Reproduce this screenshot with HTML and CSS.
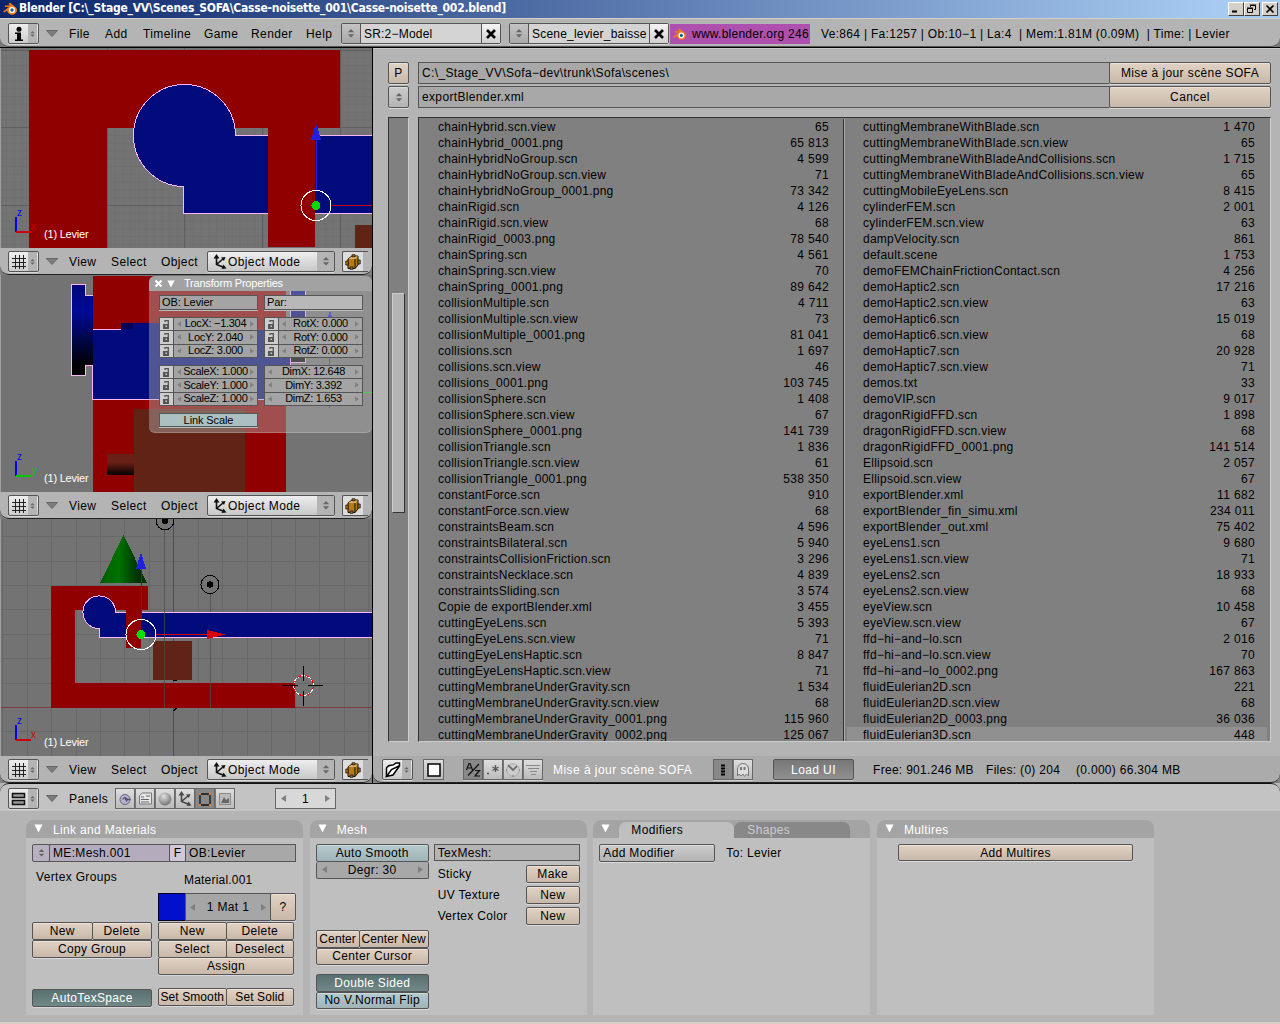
FILE: index.html
```html
<!DOCTYPE html>
<html lang="fr">
<head>
<meta charset="utf-8">
<title>Blender</title>
<link rel="stylesheet" href="styles.css">
</head>
<body>
<svg class="defs" width="0" height="0" aria-hidden="true">
  <defs>
    <linearGradient id="flange" x1="0" y1="0" x2="0" y2="1"><stop offset="0" stop-color="#00087a"/><stop offset=".3" stop-color="#000a98"/><stop offset=".6" stop-color="#00064a"/><stop offset=".9" stop-color="#000"/></linearGradient>
    <linearGradient id="cyl" x1="0" y1="0" x2="0" y2="1"><stop offset="0" stop-color="#6a2016"/><stop offset=".4" stop-color="#6a2016"/><stop offset="1" stop-color="#080000"/></linearGradient>
    <linearGradient id="cone" x1="0" y1="0" x2="1" y2="0"><stop offset="0" stop-color="#005a00"/><stop offset=".4" stop-color="#007200"/><stop offset=".85" stop-color="#002c00"/><stop offset="1" stop-color="#003c00"/></linearGradient>
    <radialGradient id="ball" cx=".4" cy=".3" r=".7"><stop offset="0" stop-color="#ddd"/><stop offset="1" stop-color="#777"/></radialGradient>
    <pattern id="fine" x="-1.6" y="49.4" width="7.78" height="7.78" patternUnits="userSpaceOnUse"><path d="M0 .5H7.78M.5 0V7.78" stroke="#6f6f6f" fill="none"/></pattern>
  </defs>
  <symbol id="i-logo" viewBox="0 0 16 14"><path d="M1 9.5 7 5H3V3.500h5L6.500 2 8 .8l6 4.700a5 4.500 0 1 1-9 3L2.500 10.500z" fill="#f47c14"/><circle cx="10" cy="8" r="3.100" fill="#fff"/><circle cx="10" cy="8" r="1.700" fill="#1c5a9c"/></symbol>
  <symbol id="i-grid" viewBox="0 0 16 16"><path d="M4.500 1v14M8.500 1v14M12.500 1v14M1 4.500h14M1 8.500h14M1 12.500h14" stroke="#222" fill="none"/></symbol>
  <symbol id="i-info" viewBox="0 0 16 16"><circle cx="8" cy="3.200" r="2.500"/><path d="M4 6.500h6v7h2V15H4v-1.500h2V8H4z"/></symbol>
  <symbol id="i-axes" viewBox="0 0 16 16"><path d="M4.500 3v7.500L11 13M5 10l6-5" stroke="#111" stroke-width="1.600" fill="none"/><path d="M4.500 0 7.500 4.500h-6zM14.500 14.500l-5 .5 2-4.500zM13.500 3l-1.500 4-3-3.500z" fill="#111"/></symbol>
  <symbol id="i-cube" viewBox="0 0 16 16"><path d="M3 5 7 2h6v9l-3 3.500H3z" fill="#b87a12" stroke="#111"/><path d="M3.500 5 7 2.500h6L10 5z" fill="#e8b860"/><path d="M10 5v9.500" stroke="#111"/><path d="M.8 7h2.400v4H.8zM13 6h2.200v4H13zM7 .8h3v2H7zM5 13h3v2.300H5z" stroke="#111" stroke-width=".8" fill="#b87a12"/></symbol>
  <symbol id="i-lock" viewBox="0 0 10 11"><path d="M4 3V1.700h3.300V5" fill="none" stroke="#555" stroke-width="1.300"/><path d="M2 5h6v5H2z" fill="#555"/><path d="M4.500 6.500h1.500v1.500H4.500z" fill="#ccc"/></symbol>
  <symbol id="i-ud" viewBox="0 0 8 10"><path d="M4 0 7.500 3.700h-7zM4 9.500 7.500 5.800h-7z" fill="#666"/></symbol>
  <symbol id="i-down" viewBox="0 0 12 8"><path d="M.5.5h11L6 6.500z" fill="#7c7c7c" stroke="#666"/></symbol>
  <symbol id="i-tri" viewBox="0 0 10 10"><path d="M.5.5h9L5 9.500z" fill="#fff"/></symbol>
  <symbol id="i-l" viewBox="0 0 5 7"><path d="M5 0v7L0 3.500z" fill="#808080"/></symbol>
  <symbol id="i-r" viewBox="0 0 5 7"><path d="M0 0v7l5-3.500z" fill="#808080"/></symbol>
  <symbol id="i-x" viewBox="0 0 12 12"><path d="M2 2l8 8M10 2l-8 8" stroke="#000" stroke-width="2.600"/></symbol>
</svg>

<div class="titlebar">
  <svg class="logo" width="16" height="14"><use href="#i-logo"/></svg>
  <h1 class="title">Blender [C:\_Stage_VV\Scenes_SOFA\Casse-noisette_001\Casse-noisette_002.blend]</h1>
  <div class="winbtns">
    <b class="wb"><svg width="12" height="10"><path d="M2 7.500h5" stroke="#000" stroke-width="2"/></svg></b>
    <b class="wb"><svg width="12" height="10"><path d="M4.500 3V1.500h5v4H8M4 1h6M1.500 4.500h5v4h-5zM1 4h6" stroke="#000" fill="none"/></svg></b>
    <b class="wb wbx"><svg width="12" height="10"><path d="M2.500 1.500l7 7M9.500 1.500l-7 7" stroke="#000" stroke-width="1.700"/></svg></b>
  </div>
</div>

<div class="top">
  <div class="bar topbar">
    <span class="ed"><svg width="16" height="16"><use href="#i-info"/></svg><i><svg width="5" height="8"><use href="#i-ud"/></svg></i></span>
    <svg class="fold" width="12" height="8"><use href="#i-down"/></svg>
    <nav class="menus"><a class="m-file">File</a><a class="m-add">Add</a><a class="m-time">Timeline</a><a class="m-game">Game</a><a class="m-rend">Render</a><a class="m-help">Help</a></nav>
    <div class="picker"><i><svg width="8" height="9"><use href="#i-ud"/></svg></i><span>SR:2−Model</span><b><svg width="12" height="12"><use href="#i-x"/></svg></b></div>
    <div class="picker"><i><svg width="8" height="9"><use href="#i-ud"/></svg></i><span>Scene_levier_baisse</span><b><svg width="12" height="12"><use href="#i-x"/></svg></b></div>
    <div class="promo"><svg width="15" height="13"><use href="#i-logo"/></svg><span>www.blender.org 246</span></div>
    <p class="stats">Ve:864 | Fa:1257 | Ob:10−1 | La:4&nbsp; | Mem:1.81M (0.09M)&nbsp; | Time: | Levier</p>
  </div>
</div>

<main class="work">
  <div class="views">
    <section class="view v1">
      <svg width="372" height="200" viewBox="0 48 372 200">
        <rect y="48" width="372" height="200" fill="#737373"/><rect y="48" width="372" height="200" fill="url(#fine)"/>
        <path d="M107.500 48v200M184.500 48v200M262.500 48v200M340.500 48v200M0 50.500h372M0 127.500h372M0 205.500h372" stroke="#606060"/>
        <path d="M29 50H340V128H315V247H268V128H107V248H29z" fill="#910000"/>
        <path d="M268 135.500H235.500A51 51 0 1 0 183.500 186.500V213.500H268" fill="#020b7c" stroke="#f8b8f8"/>
        <path d="M268 50h47v197h-47z" fill="#910000"/>
        <path d="M315 135h57v79h-57z" fill="#020b7c"/><path d="M315 135.500h57M315 213.500h57" stroke="#f8b8f8"/>
        <path d="M355 225h17v23h-17z" fill="#612315"/>
        <path d="M331 205h41v1h-41z" fill="#c00010"/><path d="M316 139h1v51h-1z" fill="#2020e0"/><path d="M316 123l5 16.500h-10z" fill="#2020e0"/>
        <circle cx="316" cy="205.500" r="15" fill="none" stroke="#fff"/><circle cx="316" cy="205.500" r="4.500" fill="#00d800"/>
        <path d="M15 217h2v15h-2z" fill="#00f"/><path d="M16 231h15v2h-15z" fill="#d00000"/>
        <text class="ax" x="17" y="216" fill="#00f">z</text><text class="ax" x="31" y="230" fill="#d00000">x</text>
        <text class="obj" x="44" y="238">(1) Levier</text>
      </svg>
    </section>
    <div class="bar vbar">
      <span class="ed"><svg width="16" height="16"><use href="#i-grid"/></svg><i><svg width="5" height="8"><use href="#i-ud"/></svg></i></span>
      <svg class="fold" width="12" height="8"><use href="#i-down"/></svg>
      <nav class="menus"><a class="m-view">View</a><a class="m-sel">Select</a><a class="m-obj">Object</a></nav>
      <div class="mode"><svg width="16" height="16"><use href="#i-axes"/></svg><span>Object Mode</span><i><svg width="8" height="9"><use href="#i-ud"/></svg></i></div>
      <div class="shade"><svg width="16" height="16"><use href="#i-cube"/></svg><i></i></div>
    </div>

    <section class="view v2">
      <svg width="372" height="217" viewBox="0 275 372 217">
        <rect y="275" width="372" height="217" fill="#737373"/>
        <path d="M93 276h193v216H93z" fill="#910000"/>
        <path d="M134 409h111v83H134z" fill="#612315"/><path d="M107 454h27v21h-27z" fill="url(#cyl)"/>
        <path d="M290.500 276h15v86h-15z" fill="url(#flange)" stroke="#f8b8f8"/>
        <path d="M92 330h198v69H92z" fill="#020b7c"/><path d="M121 323h75v8h-75z" fill="#020b7c"/><path d="M121 323h12v6h-12z" fill="#040455"/>
        <path d="M85 295h8v70h-8zM71.500 284.500h14v91h-14z" fill="url(#flange)"/>
        <path d="M92.500 295.500H85.500V284.500H71.500V375.500H85.500V365.500H92.500V399.500H290V362M92.500 329.500H121" fill="none" stroke="#f8b8f8"/>
        <path d="M329 318h1v90h-1z" fill="#2020e0"/><path d="M330 310l2 7h-4z" fill="#2020e0"/><path d="M330 392h42v1h-42z" fill="#00d800"/>
        <path d="M15 461h2v15h-2z" fill="#00f"/><path d="M16 475h15v2h-15z" fill="#00c800"/>
        <text class="ax" x="17" y="460" fill="#00f">z</text><text class="ax" x="32" y="474" fill="#00c800">y</text>
        <text class="obj" x="44" y="482">(1) Levier</text>
      </svg>
      <div class="float">
        <h2><svg width="9" height="9"><path d="M1.500 1.500l6 6M7.500 1.500l-6 6" stroke="#fff" stroke-width="2"/></svg><svg width="8" height="8"><use href="#i-tri"/></svg><span>Transform Properties</span></h2>
        <div class="fgrid">
          <div class="tf">OB: Levier</div><div class="tf light">Par:</div>
          <div class="stack">
            <div class="lk"><b><svg width="10" height="11"><use href="#i-lock"/></svg></b><div class="num"><svg width="4" height="6"><use href="#i-l"/></svg><span>LocX: −1.304</span><svg width="4" height="6"><use href="#i-r"/></svg></div></div>
            <div class="lk"><b><svg width="10" height="11"><use href="#i-lock"/></svg></b><div class="num"><svg width="4" height="6"><use href="#i-l"/></svg><span>LocY: 2.040</span><svg width="4" height="6"><use href="#i-r"/></svg></div></div>
            <div class="lk"><b><svg width="10" height="11"><use href="#i-lock"/></svg></b><div class="num"><svg width="4" height="6"><use href="#i-l"/></svg><span>LocZ: 3.000</span><svg width="4" height="6"><use href="#i-r"/></svg></div></div>
          </div>
          <div class="stack">
            <div class="lk"><b><svg width="10" height="11"><use href="#i-lock"/></svg></b><div class="num"><svg width="4" height="6"><use href="#i-l"/></svg><span>RotX: 0.000</span><svg width="4" height="6"><use href="#i-r"/></svg></div></div>
            <div class="lk"><b><svg width="10" height="11"><use href="#i-lock"/></svg></b><div class="num"><svg width="4" height="6"><use href="#i-l"/></svg><span>RotY: 0.000</span><svg width="4" height="6"><use href="#i-r"/></svg></div></div>
            <div class="lk"><b><svg width="10" height="11"><use href="#i-lock"/></svg></b><div class="num"><svg width="4" height="6"><use href="#i-l"/></svg><span>RotZ: 0.000</span><svg width="4" height="6"><use href="#i-r"/></svg></div></div>
          </div>
          <div class="stack">
            <div class="lk"><b><svg width="10" height="11"><use href="#i-lock"/></svg></b><div class="num"><svg width="4" height="6"><use href="#i-l"/></svg><span>ScaleX: 1.000</span><svg width="4" height="6"><use href="#i-r"/></svg></div></div>
            <div class="lk"><b><svg width="10" height="11"><use href="#i-lock"/></svg></b><div class="num"><svg width="4" height="6"><use href="#i-l"/></svg><span>ScaleY: 1.000</span><svg width="4" height="6"><use href="#i-r"/></svg></div></div>
            <div class="lk"><b><svg width="10" height="11"><use href="#i-lock"/></svg></b><div class="num"><svg width="4" height="6"><use href="#i-l"/></svg><span>ScaleZ: 1.000</span><svg width="4" height="6"><use href="#i-r"/></svg></div></div>
          </div>
          <div class="stack">
            <div class="lk"><div class="num"><svg width="4" height="6"><use href="#i-l"/></svg><span>DimX: 12.648</span><svg width="4" height="6"><use href="#i-r"/></svg></div></div>
            <div class="lk"><div class="num"><svg width="4" height="6"><use href="#i-l"/></svg><span>DimY: 3.392</span><svg width="4" height="6"><use href="#i-r"/></svg></div></div>
            <div class="lk"><div class="num"><svg width="4" height="6"><use href="#i-l"/></svg><span>DimZ: 1.653</span><svg width="4" height="6"><use href="#i-r"/></svg></div></div>
          </div>
          <div class="link">Link Scale</div>
        </div>
      </div>
    </section>
    <div class="bar vbar">
      <span class="ed"><svg width="16" height="16"><use href="#i-grid"/></svg><i><svg width="5" height="8"><use href="#i-ud"/></svg></i></span>
      <svg class="fold" width="12" height="8"><use href="#i-down"/></svg>
      <nav class="menus"><a class="m-view">View</a><a class="m-sel">Select</a><a class="m-obj">Object</a></nav>
      <div class="mode"><svg width="16" height="16"><use href="#i-axes"/></svg><span>Object Mode</span><i><svg width="8" height="9"><use href="#i-ud"/></svg></i></div>
      <div class="shade"><svg width="16" height="16"><use href="#i-cube"/></svg><i></i></div>
    </div>

    <section class="view v3">
      <svg width="372" height="237" viewBox="0 519 372 237">
        <rect y="519" width="372" height="237" fill="#737373"/>
        <path d="M2.500 519v237M27.500 519v237M51.500 519v237M76.500 519v237M100.500 519v237M124.500 519v237M149.500 519v237M198.500 519v237M222.500 519v237M247.500 519v237M271.500 519v237M295.500 519v237M319.500 519v237M344.500 519v237M368.500 519v237M0 536.500h372M0 561.500h372M0 585.500h372M0 609.500h372M0 634.500h372M0 658.500h372M0 683.500h372M0 731.500h372" stroke="#686868"/>
        <path d="M173 519h1v237h-1z" fill="#484880"/><path d="M0 707h372v1H0z" fill="#803c3c"/>
        <path d="M51 586H148V610H141V648H126V610H75V683H295V708H51z" fill="#910000"/>
        <path d="M123.500 535 147 583H100z" fill="url(#cone)"/>
        <path d="M372 612.500H115.500A16.300 16.300 0 1 0 99.500 628.500V637.500H372" fill="#020b7c" stroke="#f8b8f8"/>
        <path d="M126 605h15v43h-15z" fill="#910000"/>
        <path d="M153 641h39v39h-39z" fill="#612315"/>
        <path d="M164 530h1v178h-1zM210 594h1v18h-1zM210 638h1v70h-1z" fill="#4c4c4c" fill-opacity=".7"/><path d="M173 680.500h4M173.500 711l3-3" stroke="#000"/>
        <circle cx="165" cy="521" r="8.700" fill="none" stroke="#000"/><circle cx="165" cy="521" r="3"/>
        <circle cx="210" cy="584.500" r="9" fill="none" stroke="#000"/><circle cx="210" cy="584.500" r="3.200"/>
        <path d="M141 568h1v52h-1z" fill="#2020e0"/><path d="M141 552l5 17h-10z" fill="#2020e0"/>
        <path d="M156 634h52v1h-52z" fill="#d80000"/><path d="M225.500 634.500l-18.500 4.500v-9z" fill="#d80000"/>
        <circle cx="141" cy="634.500" r="15" fill="none" stroke="#fff"/><circle cx="141" cy="634.500" r="4.500" fill="#00e000"/>
        <circle cx="303.500" cy="685.500" r="10" fill="none" stroke="#fff"/><circle cx="303.500" cy="685.500" r="10" fill="none" stroke="#f00000" stroke-dasharray="4 4"/>
        <path d="M283 685h15v1h-15zM308 685h15v1h-15zM303 666h1v15h-1zM303 691h1v15h-1z"/>
        <path d="M15 725h2v15h-2z" fill="#00f"/><path d="M16 739h15v2h-15z" fill="#d00000"/>
        <text class="ax" x="17" y="724" fill="#00f">z</text><text class="ax" x="31" y="738" fill="#d00000">x</text>
        <text class="obj" x="44" y="746">(1) Levier</text>
      </svg>
    </section>
    <div class="bar vbar">
      <span class="ed"><svg width="16" height="16"><use href="#i-grid"/></svg><i><svg width="5" height="8"><use href="#i-ud"/></svg></i></span>
      <svg class="fold" width="12" height="8"><use href="#i-down"/></svg>
      <nav class="menus"><a class="m-view">View</a><a class="m-sel">Select</a><a class="m-obj">Object</a></nav>
      <div class="mode"><svg width="16" height="16"><use href="#i-axes"/></svg><span>Object Mode</span><i><svg width="8" height="9"><use href="#i-ud"/></svg></i></div>
      <div class="shade"><svg width="16" height="16"><use href="#i-cube"/></svg><i></i></div>
    </div>
  </div>

  <section class="files">
    <div class="browser">
      <div class="frow"><b class="btn pbtn">P</b><div class="path">C:\_Stage_VV\Sofa−dev\trunk\Sofa\scenes\</div><b class="btn act">Mise à jour scène SOFA</b></div>
      <div class="frow"><b class="btn grey pbtn"><svg width="8" height="9"><use href="#i-ud"/></svg></b><div class="path">exportBlender.xml</div><b class="btn act">Cancel</b></div>
      <div class="lists">
        <div class="track"><div class="thumb"></div></div>
        <div class="panes">
          <ul class="pane">
            <li>chainHybrid.scn.view<b>65</b></li><li>chainHybrid_0001.png<b>65 813</b></li><li>chainHybridNoGroup.scn<b>4 599</b></li><li>chainHybridNoGroup.scn.view<b>71</b></li><li>chainHybridNoGroup_0001.png<b>73 342</b></li><li>chainRigid.scn<b>4 126</b></li><li>chainRigid.scn.view<b>68</b></li><li>chainRigid_0003.png<b>78 540</b></li><li>chainSpring.scn<b>4 561</b></li><li>chainSpring.scn.view<b>70</b></li><li>chainSpring_0001.png<b>89 642</b></li><li>collisionMultiple.scn<b>4 711</b></li><li>collisionMultiple.scn.view<b>73</b></li><li>collisionMultiple_0001.png<b>81 041</b></li><li>collisions.scn<b>1 697</b></li><li>collisions.scn.view<b>46</b></li><li>collisions_0001.png<b>103 745</b></li><li>collisionSphere.scn<b>1 408</b></li><li>collisionSphere.scn.view<b>67</b></li><li>collisionSphere_0001.png<b>141 739</b></li><li>collisionTriangle.scn<b>1 836</b></li><li>collisionTriangle.scn.view<b>61</b></li><li>collisionTriangle_0001.png<b>538 350</b></li><li>constantForce.scn<b>910</b></li><li>constantForce.scn.view<b>68</b></li><li>constraintsBeam.scn<b>4 596</b></li><li>constraintsBilateral.scn<b>5 940</b></li><li>constraintsCollisionFriction.scn<b>3 296</b></li><li>constraintsNecklace.scn<b>4 839</b></li><li>constraintsSliding.scn<b>3 574</b></li><li>Copie de exportBlender.xml<b>3 455</b></li><li>cuttingEyeLens.scn<b>5 393</b></li><li>cuttingEyeLens.scn.view<b>71</b></li><li>cuttingEyeLensHaptic.scn<b>8 847</b></li><li>cuttingEyeLensHaptic.scn.view<b>71</b></li><li>cuttingMembraneUnderGravity.scn<b>1 534</b></li><li>cuttingMembraneUnderGravity.scn.view<b>68</b></li><li>cuttingMembraneUnderGravity_0001.png<b>115 960</b></li><li>cuttingMembraneUnderGravity_0002.png<b>125 067</b></li>
          </ul>
          <ul class="pane second">
            <li>cuttingMembraneWithBlade.scn<b>1 470</b></li><li>cuttingMembraneWithBlade.scn.view<b>65</b></li><li>cuttingMembraneWithBladeAndCollisions.scn<b>1 715</b></li><li>cuttingMembraneWithBladeAndCollisions.scn.view<b>65</b></li><li>cuttingMobileEyeLens.scn<b>8 415</b></li><li>cylinderFEM.scn<b>2 001</b></li><li>cylinderFEM.scn.view<b>63</b></li><li>dampVelocity.scn<b>861</b></li><li>default.scene<b>1 753</b></li><li>demoFEMChainFrictionContact.scn<b>4 256</b></li><li>demoHaptic2.scn<b>17 216</b></li><li>demoHaptic2.scn.view<b>63</b></li><li>demoHaptic6.scn<b>15 019</b></li><li>demoHaptic6.scn.view<b>68</b></li><li>demoHaptic7.scn<b>20 928</b></li><li>demoHaptic7.scn.view<b>71</b></li><li>demos.txt<b>33</b></li><li>demoVIP.scn<b>9 017</b></li><li>dragonRigidFFD.scn<b>1 898</b></li><li>dragonRigidFFD.scn.view<b>68</b></li><li>dragonRigidFFD_0001.png<b>141 514</b></li><li>Ellipsoid.scn<b>2 057</b></li><li>Ellipsoid.scn.view<b>67</b></li><li>exportBlender.xml<b>11 682</b></li><li>exportBlender_fin_simu.xml<b>234 011</b></li><li>exportBlender_out.xml<b>75 402</b></li><li>eyeLens1.scn<b>9 680</b></li><li>eyeLens1.scn.view<b>71</b></li><li>eyeLens2.scn<b>18 933</b></li><li>eyeLens2.scn.view<b>68</b></li><li>eyeView.scn<b>10 458</b></li><li>eyeView.scn.view<b>67</b></li><li>ffd−hi−and−lo.scn<b>2 016</b></li><li>ffd−hi−and−lo.scn.view<b>70</b></li><li>ffd−hi−and−lo_0002.png<b>167 863</b></li><li>fluidEulerian2D.scn<b>221</b></li><li>fluidEulerian2D.scn.view<b>68</b></li><li>fluidEulerian2D_0003.png<b>36 036</b></li><li class="hot">fluidEulerian3D.scn<b>448</b></li>
          </ul>
        </div>
      </div>
    </div>
    <div class="bar fbar">
      <span class="ed"><svg width="16" height="16"><path d="M1.500 14.500V6Q3 3 8 3l3-2h3.500v3L8 13l-6.500 1.500 5-7L14 4" fill="#fff" stroke="#000" stroke-width="1.500"/></svg><i><svg width="5" height="8"><use href="#i-ud"/></svg></i></span>
      <span class="tool full"><svg width="14" height="14"><path d="M1 1h12v12H1z" fill="#fff" stroke="#000" stroke-width="1.500"/></svg></span>
      <div class="group sort">
        <span class="tool on"><svg width="17" height="17"><path d="M1.500 9 4 2.500h1L7.500 9M3 7h3.500M3 14.500 14 3M10 9.500h4.500l-4.500 5.500h5" stroke="#111" fill="none" stroke-width="1.200"/></svg></span>
        <span class="tool"><svg width="16" height="16"><path d="M2 11.500h2M10.500 3v7M7.500 5l6 3.500M13.500 5l-6 3.500" stroke="#555" stroke-width="1.300"/></svg></span>
        <span class="tool"><svg width="16" height="16"><circle cx="8" cy="8" r="6.300" fill="#ccc" stroke="#aaa"/><path d="M3 3l5 5 4-4" stroke="#666" stroke-width="1.700" fill="none"/><path d="M8 13v2M14 8h1M1 8h1" stroke="#777"/></svg></span>
        <span class="tool"><svg width="16" height="16"><path d="M1 3.500h14M3 6.500h11M5 9.500h7M6 12.500h5" stroke="#888"/></svg></span>
      </div>
      <span class="msg">Mise à jour scène SOFA</span>
      <div class="group ghost">
        <span class="tool on"><svg width="16" height="16"><path d="M6 3.500h4M6 6.500h4M6 9.500h4M6 12.500h4" stroke="#000" stroke-width="1.800"/></svg></span>
        <span class="tool"><svg width="16" height="16"><path d="M2.500 14V7a5.500 5.500 0 0 1 11 0v7l-2-2-2 2.500L8 12l-2 2-2-2z" fill="#ddd" stroke="#777"/><path d="M6 5v3M9.500 5v3" stroke="#777" stroke-width="2"/></svg></span>
      </div>
      <span class="load">Load UI</span>
      <span class="f-free">Free: 901.246 MB</span><span class="f-num">Files: (0) 204</span><span>(0.000) 66.304 MB</span>
    </div>
  </section>
</main>

<section class="buttons">
  <div class="bar bbar">
    <span class="ed"><svg width="16" height="16"><path d="M1.500 2.500h12v4h-12zM1.500 9.500h12v4h-12z" fill="#999" stroke="#111" stroke-width="1.500"/></svg><i><svg width="5" height="8"><use href="#i-ud"/></svg></i></span>
    <svg class="fold" width="12" height="8"><use href="#i-down"/></svg>
    <span class="m-panels">Panels</span>
    <div class="group ctx">
      <span class="tool"><svg width="16" height="16"><circle cx="8" cy="8.500" r="5" fill="#b8b0d0" stroke="#66627c"/><path d="M8 8.500h5.500M6 8.500a2 2 0 1 1 3 2" stroke="#55506c" stroke-width="1.300" fill="none"/></svg></span>
      <span class="tool"><svg width="16" height="16"><path d="M2.500 4.500l3-2.500h9v11h-12z" fill="#e6e6e6" stroke="#777"/><path d="M4 6h3M9 5h4M4 8.500h8M4 11h8" stroke="#666" stroke-width="1.200"/></svg></span>
      <span class="tool"><svg width="16" height="16"><circle cx="8" cy="8" r="6.500" fill="url(#ball)"/></svg></span>
      <span class="tool"><svg class="dim" width="16" height="16"><use href="#i-axes"/></svg></span>
      <span class="tool on"><svg width="16" height="16"><path d="M3 3h10v11H3z" fill="none" stroke="#111" stroke-width="1.300"/><path d="M2 2h2v2H2zM12 2h2v2h-2zM2 13h2v2H2zM12 13h2v2h-2z" fill="#e88030"/></svg></span>
      <span class="tool"><svg width="16" height="16"><path d="M2.500 2.500h11v11h-11z" fill="#bbb" stroke="#888"/><path d="M4 12l3-6 2 3 3-2v5z" fill="#666"/></svg></span>
    </div>
    <div class="frame"><svg width="5" height="7"><use href="#i-l"/></svg><span>1</span><svg width="5" height="7"><use href="#i-r"/></svg></div>
  </div>

  <div class="panels">
    <article class="panel">
      <h3><svg width="9" height="9"><use href="#i-tri"/></svg>Link and Materials</h3>
      <div class="pbody">
        <div class="row mesh"><b class="btn lav sel"><svg width="7" height="8"><use href="#i-ud"/></svg></b><b class="lavf">ME:Mesh.001</b><b class="btn lav f">F</b><b class="path grow">OB:Levier</b></div>
        <div class="cols">
          <div class="c-left">
            <p class="vg">Vertex Groups</p>
            <div class="row"><b class="btn grow">New</b><b class="btn grow">Delete</b></div>
            <div class="row"><b class="btn grow">Copy Group</b></div>
            <div class="row auto"><b class="btn dark grow">AutoTexSpace</b></div>
          </div>
          <div class="c-mat">
            <p class="mt">Material.001</p>
            <div class="row mat"><b class="swatch"></b><b class="num matn"><svg width="5" height="7"><use href="#i-l"/></svg><span>1 Mat 1</span><svg width="5" height="7"><use href="#i-r"/></svg></b><b class="btn q">?</b></div>
            <div class="row r2"><b class="btn grow">New</b><b class="btn grow">Delete</b></div>
            <div class="row r2"><b class="btn grow">Select</b><b class="btn grow">Deselect</b></div>
            <div class="row r2"><b class="btn grow">Assign</b></div>
            <div class="row r2 smooth"><b class="btn grow">Set Smooth</b><b class="btn grow">Set Solid</b></div>
          </div>
        </div>
      </div>
    </article>
    <article class="panel">
      <h3><svg width="9" height="9"><use href="#i-tri"/></svg>Mesh</h3>
      <div class="pbody cols2">
        <div class="c-auto">
          <div class="row"><b class="btn teal grow">Auto Smooth</b></div>
          <div class="row"><b class="num grow"><svg width="5" height="7"><use href="#i-l"/></svg><span>Degr: 30</span><svg width="5" height="7"><use href="#i-r"/></svg></b></div>
          <div class="row center"><b class="btn cen">Center</b><b class="btn grow">Center New</b></div>
          <div class="row"><b class="btn grow">Center Cursor</b></div>
          <div class="row dbl"><b class="btn dark grow">Double Sided</b></div>
          <div class="row"><b class="btn teal grow">No V.Normal Flip</b></div>
        </div>
        <div class="c-tex">
          <div class="path tex">TexMesh:</div>
          <div class="kv">Sticky<b class="btn">Make</b></div>
          <div class="kv">UV Texture<b class="btn">New</b></div>
          <div class="kv">Vertex Color<b class="btn">New</b></div>
        </div>
      </div>
    </article>
    <article class="panel">
      <h3 class="tabs"><svg width="9" height="9"><use href="#i-tri"/></svg><span class="tab act-tab">Modifiers</span><span class="tab">Shapes</span></h3>
      <div class="pbody mods"><b class="btn grey addm">Add Modifier</b><span>To: Levier</span></div>
    </article>
    <article class="panel">
      <h3><svg width="9" height="9"><use href="#i-tri"/></svg>Multires</h3>
      <div class="pbody multi"><b class="btn">Add Multires</b></div>
    </article>
  </div>
</section>
</body>
</html>
```
FILE: styles.css
```css
* { box-sizing: border-box; margin: 0; padding: 0; }
body { width: 1280px; height: 1024px; overflow: hidden; background: #d4d0c8; color: #000; font: 12px/14px "Liberation Sans", Arial, sans-serif; letter-spacing: .4px; display: flex; flex-direction: column; white-space: nowrap; }
b, i { font-weight: normal; font-style: normal; }
svg { display: block; flex: none; }
.defs { position: absolute; }

.titlebar { height: 19px; flex: none; display: flex; align-items: center; padding: 0 2px 1px; background: linear-gradient(90deg, #0a246a, #a6caf0 95%); border-bottom: 1px solid #d4d0c8; }
.title { margin-left: 1px; font: bold 12px/17px "DejaVu Sans Condensed", "DejaVu Sans", sans-serif; letter-spacing: -.24px; color: #fff; }
.winbtns { margin-left: auto; display: flex; }
.wb { width: 16px; height: 14px; padding: 1px; background: #d4d0c8; border: 1px solid; border-color: #fff #404040 #404040 #fff; }
.wbx { margin-left: 2px; }

.top { height: 29px; flex: none; background: #777; border-bottom: 1px solid #000; }
.bar { height: 27px; flex: none; display: flex; align-items: flex-start; padding: 3px 0 0 8px; line-height: 22px; border: solid #222; border-width: 0 0 1px; border-radius: 0 0 9px 9px; background: #b4b4b4; }
.topbar { height: 28px; padding-top: 4px; border-color: #555; }
.ed { width: 31px; height: 21px; display: flex; align-items: center; padding-left: 2px; border: 1px solid #555; border-radius: 2px; background: linear-gradient(#eee, #ccc); box-shadow: 0 1px #d8d8d8; }
.ed i { margin-left: 1px; width: 9px; height: 19px; display: flex; align-items: center; justify-content: center; background: #b4b4b4; }
.fold { margin: 7px 11px 0 7px; }
.menus { display: flex; }
.m-file { width: 36px; } .m-add { width: 38px; } .m-time { width: 61px; } .m-game { width: 47px; } .m-rend { width: 55px; } .m-help { width: 35px; }
.m-view { width: 42px; } .m-sel { width: 50px; } .m-obj { width: 46px; }
.picker { width: 160px; height: 21px; margin-right: 8px; display: flex; border: 1px solid #555; border-radius: 2px; background: #d4d4d4; box-shadow: 0 1px #d8d8d8; }
.picker i { width: 19px; display: flex; align-items: center; justify-content: center; background: linear-gradient(#c4c4c4, #a8a8a8); border-right: 1px solid #555; }
.picker span { flex: 1; padding-left: 3px; line-height: 21px; letter-spacing: .2px; }
.picker b { width: 19px; display: flex; align-items: center; justify-content: center; background: linear-gradient(#f4f4f4, #d0d0d0); border-left: 1px solid #555; }
.picker + .promo { margin-left: -7px; }
.promo { width: 140px; height: 20px; margin-top: 1px; display: flex; align-items: center; padding-left: 2px; background: #ae50ae; line-height: 20px; }
.promo span { margin-left: 5px; letter-spacing: .25px; }
.stats { margin-left: 11px; letter-spacing: .31px; }

.work { height: 735px; flex: none; display: flex; background: #808080; }
.views { width: 373px; flex: none; border-right: 1px solid #000; }
.view { position: relative; overflow: hidden; border-left: 1px solid #a0a0a0; }
.view > svg { margin-left: -1px; shape-rendering: crispEdges; }
.v1 { height: 200px; } .v2 { height: 217px; } .v3 { height: 237px; }
.ax { font: 10px "Liberation Sans", sans-serif; }
.obj { font: 11px "Liberation Sans", sans-serif; letter-spacing: -.2px; fill: #fff; }
.mode { width: 128px; height: 21px; display: flex; align-items: center; padding-left: 4px; border: 1px solid #555; border-radius: 2px; background: linear-gradient(#eee, #c8c8c8); box-shadow: 0 1px #d8d8d8; }
.mode i { margin-left: auto; width: 17px; height: 19px; display: flex; align-items: center; justify-content: center; background: #b4b4b4; }
.shade { width: 26px; height: 21px; margin-left: 7px; padding: 2px 0 0 2px; border: 1px solid #555; border-right: 0; border-radius: 2px 0 0 2px; background: linear-gradient(90deg, #ddd 20px, #b4b4b4 20px); }

.float { position: absolute; left: 148px; top: 1px; width: 223px; height: 157px; background: rgba(180,180,180,.43); border-radius: 6px; box-shadow: inset 0 -1px rgba(255,255,255,.2); font-size: 11px; line-height: 13px; letter-spacing: -.3px; overflow: hidden; }
.float h2 { height: 15px; display: flex; align-items: center; padding-left: 5px; font: inherit; letter-spacing: -.2px; color: #fff; background: #a2a2a2; }
.float h2 svg + svg { margin-left: 4px; }
.float h2 span { margin-left: 9px; }
.fgrid { display: grid; grid-template-columns: 99px 99px; column-gap: 6px; padding: 4px 0 0 10px; }
.tf { height: 15px; padding-left: 2px; background: #a4a4a4; border: 1px solid #555; box-shadow: 0 1px #bbb; letter-spacing: -.1px; }
.light { background: #b8b8b8; }
.stack { margin-top: 6.500px; border: 1px solid #555; border-bottom: 0; }
.lk { height: 13.500px; display: flex; border-bottom: 1px solid #555; background: #a4a4a4; }
.lk b { width: 14px; padding: 1px 0 0 1px; background: #ccc; border-right: 1px solid #555; }
.num { flex: 1; display: flex; align-items: center; justify-content: space-between; padding: 0 3px; }
.link { height: 14px; margin-top: 7px; line-height: 12px; border: 1px solid #4c5c5e; background: #acc0c2; text-align: center; letter-spacing: -.1px; box-shadow: 0 1px #bbb; }

.files { flex: 1; display: flex; flex-direction: column; }
.browser { height: 708px; background: #b4b4b4; padding: 14px 9px 0 15px; display: flex; flex-direction: column; box-shadow: inset 0 1px #c8c8c8; }
.frow { display: flex; height: 22px; margin-bottom: 2px; }
.btn { display: flex; align-items: center; justify-content: center; border: 1px solid #555; border-radius: 2px; background: linear-gradient(#e0d2c4, #c8b8aa); box-shadow: inset 0 1px #eee2d8, 0 1px #d8d8d8; overflow: hidden; }
.pbtn { width: 21px; margin-right: 9px; }
.act { width: 162px; margin-left: -1px; }
.grey { background: linear-gradient(#ccc, #b4b4b4); box-shadow: inset 0 1px #ddd, 0 1px #d8d8d8; }
.path { flex: 1; padding-left: 3px; line-height: 21px; border: 1px solid #555; background: #a8a8a8; letter-spacing: .35px; }
.lists { display: flex; height: 625px; margin-top: 7px; }
.track { width: 21px; margin-right: 9px; padding: 175px 3px 0; background: #808080; border: 1px solid #333; border-color: #333 #ccc #ccc #333; }
.thumb { width: 13px; height: 220px; background: #b4b4b4; border: 1px solid; border-color: #ccc #333 #333 #ccc; }
.panes { flex: 1; display: flex; padding-top: 1px; background: #808080; border: 1px solid #333; border-color: #333 #ccc #ccc #333; overflow: hidden; }
.pane { width: 425px; flex: none; list-style: none; padding: 0 14px 0 19px; letter-spacing: .25px; border-right: 1px solid #333; }
.second { width: 425px; padding: 0; margin-left: 0; border: 0; border-left: 1px solid #aaa; }
.pane li { display: flex; justify-content: space-between; height: 16px; line-height: 16px; }
.pane b { letter-spacing: .35px; }
.second li { padding: 0 12px 0 16px; margin: 0 2px 0 2px; }
.hot { background: #909090; }
.fbar { padding-left: 9px; background: #ababab; }
.tool { width: 20px; height: 21px; display: flex; align-items: center; justify-content: center; border: 1px solid #666; background: linear-gradient(#ddd, #bcbcbc); }
.tool + .tool { border-left-color: #777; }
.on { background: #888; }
.full { margin-left: 10px; width: 21px; }
.group { display: flex; height: 21px; box-shadow: 0 1px #d0d0d0; }
.sort { margin-left: 19px; }
.msg { margin-left: 10px; width: 160px; color: #fff; letter-spacing: .45px; }
.load { width: 81px; height: 21px; margin-left: 20px; line-height: 20px; border: 1px solid #555; border-radius: 2px; text-align: center; color: #fff; background: linear-gradient(#777, #909090); box-shadow: 0 1px #ccc; }
.f-free { margin-left: 19px; width: 113px; letter-spacing: .3px; } .f-num { width: 90px; letter-spacing: .3px; }
.f-num + span { letter-spacing: .3px; }

.buttons { flex: none; height: 239px; background: #b4b4b4; }
.bbar { height: 28px; padding-top: 4px; background: #c3c3c3; border: 0; border-top: 1px solid #111; border-radius: 9px 9px 0 0; }
.m-panels { width: 46px; }
.dim { opacity: .7; }
.frame { width: 61px; height: 21px; margin-left: 40px; display: flex; align-items: center; justify-content: space-between; padding: 0 5px; border: 1px solid #666; background: #d8d8d8; }
.panels { display: flex; gap: 6.670px; padding: 9px 0 0 26px; letter-spacing: .33px; }
.panel { width: 277px; height: 195px; background: #bfbfbf; border-radius: 8px 8px 0 0; }
.panel h3 { height: 18px; display: flex; align-items: center; padding: 1px 0 0 8px; font: inherit; color: #fff; background: #a4a4a4; border-radius: 8px 8px 0 0; }
.panel h3 > svg { margin: -3px 10px 0 0; }
.pbody { padding: 6px 0 0 6px; }
.row { display: flex; height: 18px; }
.row b + b { margin-left: -1px; }
.grow { flex: 1 1 0; }
.mesh { width: 264px; height: 18px; }
.mesh .path, .tex { line-height: 16px; }
.lav { background: #b8b0c0; box-shadow: none; }
.sel { width: 18px; }
.lavf { width: 121px; padding-left: 3px; line-height: 16px; border: 1px solid #555; background: #b4acbc; }
.f { width: 17px; background: #d0c8d8; }
.cols { display: flex; }
.c-left { width: 120px; }
.c-left .row { width: 120px; }
.vg { height: 60px; padding: 8px 0 0 4px; }
.auto.row { margin-top: 31px; }
.c-mat { margin-left: 6px; }
.mt { height: 31px; padding: 11px 0 0 26px; letter-spacing: .2px; }
.mat { width: 138px; height: 28px; margin-bottom: 1px; }
.swatch { width: 28px; background: #0010cc; border: 1px solid #002; }
.matn { border: 1px solid #555; background: #a6a6a6; padding: 0 4px; }
.q { width: 26px; }
.r2 { width: 136px; margin-bottom: -.4px; }
.smooth { margin-top: 13px; letter-spacing: .1px; }
.dark { color: #fff; background: linear-gradient(#587070, #708888); box-shadow: 0 1px #d8d8d8; }
.teal { background: linear-gradient(#b4cacc, #a0b4b8); box-shadow: inset 0 1px #c8dcdc, 0 1px #d8d8d8; }
.cols2 { display: flex; }
.c-auto { width: 113px; }
.c-auto .row { height: 17.500px; }
.c-auto .num { border: 1px solid #555; border-top: 0; border-radius: 2px; background: #a8a8a8; padding: 0 5px; }
.c-auto .center { margin-top: 51px; letter-spacing: .1px; }
.cen { width: 44px; }
.c-auto .dbl { margin-top: 9px; }
.c-tex { width: 146px; margin-left: 5px; }
.tex { height: 17px; margin-bottom: 4px; background: #b4b4b4; }
.kv { display: flex; justify-content: space-between; align-items: center; height: 18px; margin-bottom: 3px; padding-left: 4px; }
.kv b { width: 54px; height: 18px; }
.panel h3.tabs { align-items: flex-end; padding-top: 0; }
.panel h3.tabs svg { margin: 0 9px 5px 0; }
.tab { width: 116px; height: 16px; padding: 1px 0 0 13px; color: #ccc; background: #888; border-radius: 7px 7px 0 0; line-height: 15px; }
.act-tab { width: 115px; color: #000; background: #bfbfbf; padding-left: 12px; }
.mods { display: flex; align-items: center; }
.addm { width: 116px; height: 18px; justify-content: flex-start; padding-left: 3px; margin-right: 11px; }
.multi { padding-left: 21px; }
.multi b { width: 235px; height: 17px; }
```
